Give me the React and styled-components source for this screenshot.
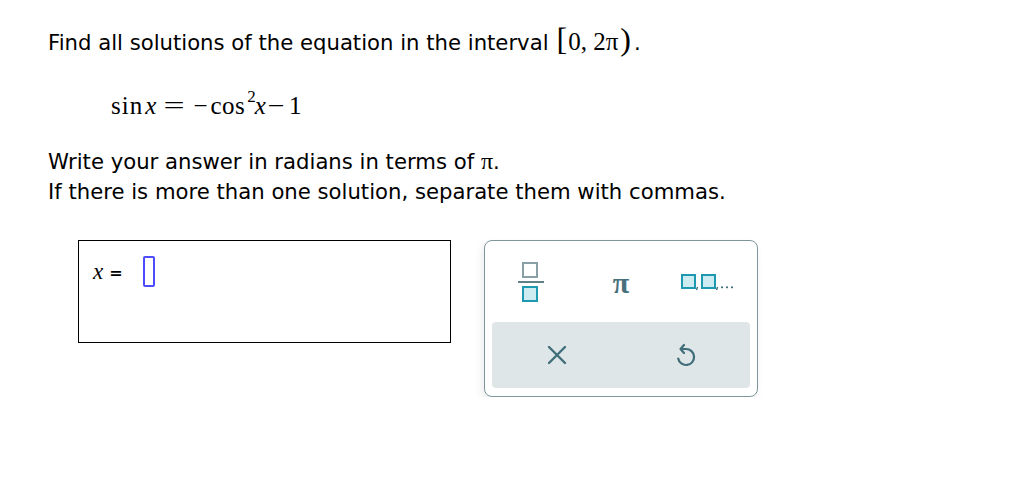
import React from "react";
import styled, { createGlobalStyle } from "styled-components";

const GlobalStyle = createGlobalStyle`
  body {
    margin: 0;
    background: #ffffff;
  }
`;

const serif = `"Liberation Serif", "Times New Roman", "DejaVu Serif", serif`;

const Page = styled.div`
  padding: 28px 0 0 48px;
  font-family: Verdana, "DejaVu Sans", sans-serif;
  font-size: 21.2px;
  color: #000;
`;

const Prompt = styled.p`
  margin: 0;
  line-height: 30px;
  white-space: nowrap;
`;

const MathText = styled.span`
  font-family: ${serif};
  font-size: ${(p) => p.size || 20}px;
  font-style: ${(p) => (p.italic ? "italic" : "normal")};
  line-height: 0;
`;

const Bracket = styled.span`
  font-family: ${serif};
  font-size: 32px;
  line-height: 0;
  margin: 0 ${(p) => p.mr || 0}px 0 ${(p) => p.ml || 0}px;
`;

const Equation = styled.div`
  margin: 33px 0 0 63px;
  font-family: ${serif};
  font-size: 25px;
  line-height: 30px;
  display: flex;
  align-items: baseline;
`;

const Sym = styled.span`
  display: inline-block;
  margin-left: ${(p) => p.ml || 0}px;
  margin-right: ${(p) => p.mr || 0}px;
  font-style: ${(p) => (p.italic ? "italic" : "normal")};
  letter-spacing: ${(p) => p.ls || 0}px;
  transform: scaleX(${(p) => p.sx || 1});
`;

const Sup = styled.span`
  font-size: 17px;
  position: relative;
  top: -12px;
  margin: 0 -1px 0 2px;
`;

const Instructions = styled.div`
  margin-top: 23px;
  line-height: 30px;
`;

const AnswerArea = styled.div`
  display: flex;
  align-items: flex-start;
  gap: 33px;
  margin: 33px 0 0 30px;
`;

const AnswerBox = styled.div`
  width: 373px;
  height: 103px;
  border: 1px solid #000;
  box-sizing: border-box;
  padding: 15px 0 0 14px;
`;

const AnswerRow = styled.div`
  display: flex;
  align-items: center;
  height: 31px;
`;

const Equals = styled.span`
  font-family: "DejaVu Sans", sans-serif;
  font-size: 16px;
  font-weight: bold;
  margin: 2px 20px 0 6px;
`;

const Cursor = styled.span`
  display: inline-block;
  width: 12px;
  height: 31px;
  border: 2px solid #4d4dff;
  border-radius: 2px;
  box-sizing: border-box;
`;

const Keypad = styled.div`
  width: 274px;
  height: 157px;
  box-sizing: border-box;
  border: 1px solid #7f959c;
  border-radius: 8px;
  background: #fff;
  box-shadow: -2px 4px 8px rgba(0, 0, 0, 0.08);
  padding: 0 7px 7px;
  display: flex;
  flex-direction: column;
`;

const KeyRow = styled.div`
  display: grid;
  grid-template-columns: repeat(${(p) => p.cols}, 1fr);
  height: ${(p) => p.h}px;
  align-items: center;
  justify-items: center;
  ${(p) => p.tray && "background: #dfe6e8; border-radius: 4px;"}
`;

const Key = styled.div`
  display: flex;
  align-items: center;
  justify-content: center;
  color: #3f6e7a;
  cursor: pointer;
  margin-left: ${(p) => p.shift || 0}px;
`;

const PiGlyph = styled.span`
  font-family: ${serif};
  font-size: 30px;
  font-weight: bold;
  line-height: 1;
  color: #46707b;
  margin-top: 2px;
`;

const FractionIcon = () => (
  <svg width="28" height="42" viewBox="0 0 28 42">
    <rect x="5" y="2" width="14" height="14" fill="#fff" stroke="#8aa0a7" strokeWidth="2" />
    <rect x="0" y="20" width="26" height="2" fill="#5f7f89" />
    <rect x="5" y="26" width="14" height="14" fill="#ccecf1" stroke="#1d9ab2" strokeWidth="2" />
  </svg>
);

const ListIcon = () => (
  <svg width="58" height="20" viewBox="0 0 58 20">
    <rect x="2" y="3" width="13" height="13" fill="#ccecf1" stroke="#1d9ab2" strokeWidth="2" />
    <path d="M17.5 15 l-1 3" stroke="#3f6e7a" strokeWidth="1.4" />
    <rect x="22" y="3" width="13" height="13" fill="#ccecf1" stroke="#1d9ab2" strokeWidth="2" />
    <path d="M37.5 15 l-1 3" stroke="#3f6e7a" strokeWidth="1.4" />
    <circle cx="42" cy="15.3" r="1.1" fill="#3f6e7a" />
    <circle cx="47" cy="15.3" r="1.1" fill="#3f6e7a" />
    <circle cx="52" cy="15.3" r="1.1" fill="#3f6e7a" />
  </svg>
);

const ClearIcon = () => (
  <svg width="20" height="20" viewBox="0 0 20 20">
    <path d="M2 2 L18 18 M18 2 L2 18" stroke="#3f6e7a" strokeWidth="2.4" strokeLinecap="round" />
  </svg>
);

const UndoIcon = () => (
  <svg width="22" height="26" viewBox="0 0 22 26">
    <path
      d="M9 3 L5.5 7 L9 11 M5.5 7 H11 A8 8 0 1 1 3.2 16.5"
      fill="none"
      stroke="#3f6e7a"
      strokeWidth="2.2"
      strokeLinecap="round"
      strokeLinejoin="round"
    />
  </svg>
);

export default function App() {
  return (
    <>
      <GlobalStyle />
      <Page>
        <Prompt>
          Find all solutions of the equation in the interval
          <Bracket ml={8} mr={1}>[</Bracket>
          <MathText size={25}>0, 2π</MathText>
          <Bracket ml={2} mr={3}>)</Bracket>.
        </Prompt>

        <Equation>
          <Sym ls={1}>sin</Sym>
          <Sym italic ml={2}>x</Sym>
          <Sym ml={11} mr={8} sx={1.5}>=</Sym>
          <Sym ml={4}>−</Sym>
          <Sym ml={3} ls={0.5}>cos</Sym>
          <Sup>2</Sup>
          <Sym italic>x</Sym>
          <Sym ml={3} sx={1.2}>−</Sym>
          <Sym ml={6}>1</Sym>
        </Equation>

        <Instructions>
          Write your answer in radians in terms of <MathText size={24}>π</MathText>.
          <br />
          If there is more than one solution, separate them with commas.
        </Instructions>

        <AnswerArea>
          <AnswerBox>
            <AnswerRow>
              <MathText size={23} italic>
                x
              </MathText>
              <Equals>=</Equals>
              <Cursor />
            </AnswerRow>
          </AnswerBox>

          <Keypad>
            <KeyRow cols={3} h={81}>
              <Key shift={-6}>
                <FractionIcon />
              </Key>
              <Key>
                <PiGlyph>π</PiGlyph>
              </Key>
              <Key shift={4}>
                <ListIcon />
              </Key>
            </KeyRow>
            <KeyRow cols={2} h={66} tray>
              <Key>
                <ClearIcon />
              </Key>
              <Key>
                <UndoIcon />
              </Key>
            </KeyRow>
          </Keypad>
        </AnswerArea>
      </Page>
    </>
  );
}
